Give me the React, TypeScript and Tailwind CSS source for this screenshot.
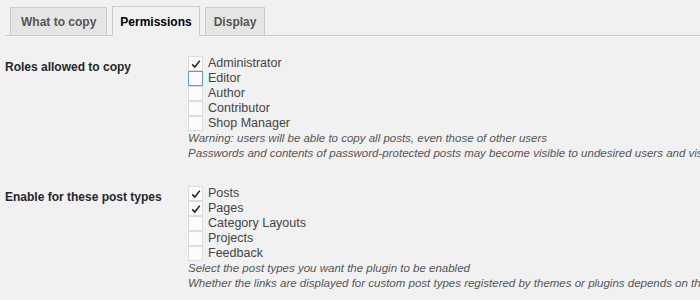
import React from "react";

function Box({ checked, focus }: { checked?: boolean; focus?: boolean }) {
  return (
    <span
      className={
        "flex h-[15px] w-[15px] shrink-0 items-center justify-center border bg-[#fbfbfb] " +
        (focus ? "border-[#5b9dd9]" : "border-[#dcdcdc]")
      }
    >
      {checked && (
        <svg width="12" height="12" viewBox="0 0 12 12">
          <path d="M2.2 6.4 L4.8 9 L9.8 2.6" fill="none" stroke="#1e1e1e" strokeWidth="1.5" />
        </svg>
      )}
    </span>
  );
}

function Item({ label, checked, focus }: { label: string; checked?: boolean; focus?: boolean }) {
  return (
    <div className="flex h-[15px] items-center">
      <Box checked={checked} focus={focus} />
      <span className="ml-[5px] text-[12.5px] leading-[15px] text-[#444]">{label}</span>
    </div>
  );
}

function Desc({ children }: { children: React.ReactNode }) {
  return <div className="h-[15px] whitespace-nowrap text-[11.5px] italic leading-[15px] text-[#555]">{children}</div>;
}

export default function App() {
  return (
    <div
      className="h-[300px] w-[700px] overflow-hidden bg-[#f1f1f1]"
      style={{ fontFamily: '"Liberation Sans", Arial, sans-serif' }}
    >
      <div className="ml-[5px] flex items-end gap-[5px] border-b border-[#ccc] pl-[5px] pt-[6px]">
        <div className="flex h-[28px] items-center border border-b-0 border-[#ccc] bg-[#e5e5e5] px-[10px] text-[12px] font-bold text-[#555]">
          What to copy
        </div>
        <div className="-mb-px flex h-[30px] items-center border border-b-0 border-[#ccc] bg-[#f1f1f1] px-[7px] text-[12px] font-bold text-[#000]">
          Permissions
        </div>
        <div className="flex h-[28px] items-center border border-b-0 border-[#ccc] bg-[#e5e5e5] px-[8px] text-[12px] font-bold text-[#555]">
          Display
        </div>
      </div>

      <div className="mt-[20px] flex">
        <div className="w-[188px] shrink-0 pl-[5px] pt-[2px] text-[12px] font-bold text-[#23282d]">Roles allowed to copy</div>
        <div className="flex min-w-0 flex-col">
          <Item label="Administrator" checked />
          <Item label="Editor" focus />
          <Item label="Author" />
          <Item label="Contributor" />
          <Item label="Shop Manager" />
          <Desc>Warning: users will be able to copy all posts, even those of other users</Desc>
          <Desc>Passwords and contents of password-protected posts may become visible to undesired users and visitors</Desc>
        </div>
      </div>

      <div className="mt-[25px] flex">
        <div className="w-[188px] shrink-0 pl-[5px] pt-[2px] text-[12px] font-bold text-[#23282d]">Enable for these post types</div>
        <div className="flex min-w-0 flex-col">
          <Item label="Posts" checked />
          <Item label="Pages" checked />
          <Item label="Category Layouts" />
          <Item label="Projects" />
          <Item label="Feedback" />
          <Desc>Select the post types you want the plugin to be enabled</Desc>
          <Desc>Whether the links are displayed for custom post types registered by themes or plugins depends on their use of standard WordPress UI elements</Desc>
        </div>
      </div>
    </div>
  );
}
